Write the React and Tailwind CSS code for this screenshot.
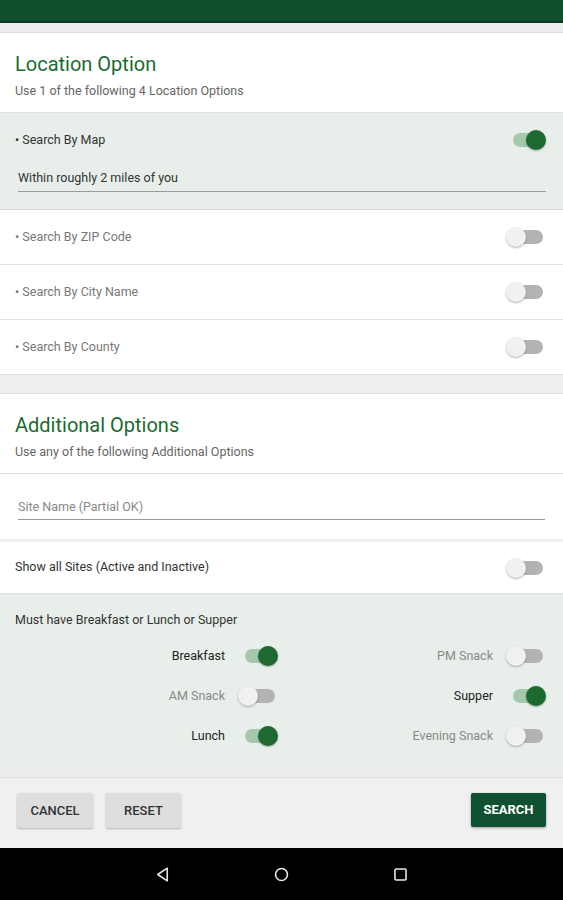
import React from 'react';

function Toggle({ on }) {
  return (
    <div className="relative w-[40px] h-[20px] shrink-0">
      <div className={`absolute top-[3px] left-[7px] w-[30px] h-[14px] rounded-full ${on ? 'bg-[#a6c9ae]' : 'bg-[#b3b3b3]'}`} />
      <div
        className={`absolute top-0 w-[20px] h-[20px] rounded-full shadow-[0_1px_2px_rgba(0,0,0,0.3)] ${on ? 'left-[20px] bg-[#1d6a31]' : 'left-0 bg-[#f1f1f1]'}`}
      />
    </div>
  );
}

function SectionHeader({ title, subtitle }) {
  return (
    <div className="bg-white px-[15px] pt-[19px] pb-[13px] border-b border-[#e2e2e2]">
      <div className="text-[20px] leading-[24px] text-[#1b6a2f]">{title}</div>
      <div className="mt-[7px] text-[12.5px] leading-[16px] text-[#666]">{subtitle}</div>
    </div>
  );
}

function OptionRow({ label }) {
  return (
    <div className="h-[55px] bg-white flex items-center justify-between pl-[15px] pr-[17px] border-b border-[#e2e2e2]">
      <span className="text-[12.5px] text-[#777]">• {label}</span>
      <Toggle on={false} />
    </div>
  );
}

function Meal({ label, on }) {
  return (
    <div className="flex items-center justify-end gap-[13px]">
      <span className={`text-[12.5px] ${on ? 'text-[#222]' : 'text-[#888]'}`}>{label}</span>
      <Toggle on={on} />
    </div>
  );
}

export default function App() {
  return (
    <div className="w-[563px] h-[900px] flex flex-col bg-[#eeeeee] overflow-hidden" style={{ fontFamily: 'Roboto, "Noto Sans", sans-serif' }}>
      {/* app bar */}
      <div className="h-[23px] bg-[#0f4f2e] border-b-2 border-[#09381f]" />
      <div className="h-[10px] bg-[#ececec] border-b border-[#dadada]" />

      <div className="flex-1 flex flex-col">
        <SectionHeader title="Location Option" subtitle="Use 1 of the following 4 Location Options" />

        <div className="h-[97px] bg-[#e8efea] border-b border-[#d6d6d6] pl-[15px] pr-[17px] pt-[17px]">
          <div className="flex items-center justify-between">
            <span className="text-[12.5px] text-[#333]">• Search By Map</span>
            <Toggle on />
          </div>
          <div className="mt-[19px] ml-[3px] pb-[3px] border-b border-[#9a9a9a] text-[12.5px] text-[#333]">
            Within roughly 2 miles of you
          </div>
        </div>

        <OptionRow label="Search By ZIP Code" />
        <OptionRow label="Search By City Name" />
        <OptionRow label="Search By County" />

        <div className="h-[19px] bg-[#eeeeee] border-b border-[#e0e0e0]" />

        <SectionHeader title="Additional Options" subtitle="Use any of the following Additional Options" />

        <div className="h-[65px] bg-white pl-[18px] pr-[18px] pt-[24px]">
          <div className="pb-[2px] border-b border-[#9a9a9a] text-[12.5px] text-[#888]">Site Name (Partial OK)</div>
        </div>

        <div className="h-[3px] bg-[#f0f0f0]" />

        <div className="h-[52px] bg-white flex items-center justify-between pl-[15px] pr-[17px] border-b border-[#e2e2e2]">
          <span className="text-[12.5px] text-[#333]">Show all Sites (Active and Inactive)</span>
          <Toggle on={false} />
        </div>

        <div className="h-[172px] bg-[#e8efea] pt-[18px] pl-[15px] pr-[17px]">
          <div className="text-[12.5px] leading-[16px] text-[#333]">Must have Breakfast or Lunch or Supper</div>
          <div className="mt-[8px] grid grid-cols-[263px_1fr] auto-rows-[40px] items-center">
            <Meal label="Breakfast" on />
            <Meal label="PM Snack" on={false} />
            <Meal label="AM Snack" on={false} />
            <Meal label="Supper" on />
            <Meal label="Lunch" on />
            <Meal label="Evening Snack" on={false} />
          </div>
        </div>

        <div className="h-[12px] bg-[#ececec] border-b border-[#dcdcdc]" />

        {/* button bar */}
        <div className="h-[70px] bg-[#f0f0f0] flex items-start pt-[15px] px-[17px] gap-[13px]">
          <button className="w-[76px] h-[35px] rounded-[2px] bg-[#dedede] shadow-[0_1px_2px_rgba(0,0,0,0.25)] text-[13px] font-medium text-[#333]">CANCEL</button>
          <button className="w-[75px] h-[35px] rounded-[2px] bg-[#dedede] shadow-[0_1px_2px_rgba(0,0,0,0.25)] text-[13px] font-medium text-[#333]">RESET</button>
          <button className="ml-auto w-[75px] h-[34px] rounded-[2px] bg-[#0f5030] shadow-[0_1px_3px_rgba(0,0,0,0.35)] text-[13px] font-bold text-white">SEARCH</button>
        </div>
      </div>

      {/* nav bar */}
      <div className="h-[52px] bg-black flex items-center justify-center gap-[100px]">
        <svg width="19" height="19" viewBox="0 0 24 24" fill="none" stroke="#e8e8e8" strokeWidth="2" strokeLinejoin="round">
          <path d="M18 4 L6 12 L18 20 Z" />
        </svg>
        <svg width="19" height="19" viewBox="0 0 24 24" fill="none" stroke="#e8e8e8" strokeWidth="2">
          <circle cx="12" cy="12" r="7.5" />
        </svg>
        <svg width="19" height="19" viewBox="0 0 24 24" fill="none" stroke="#e8e8e8" strokeWidth="2">
          <rect x="5" y="5" width="14" height="14" rx="1.5" />
        </svg>
      </div>
    </div>
  );
}
